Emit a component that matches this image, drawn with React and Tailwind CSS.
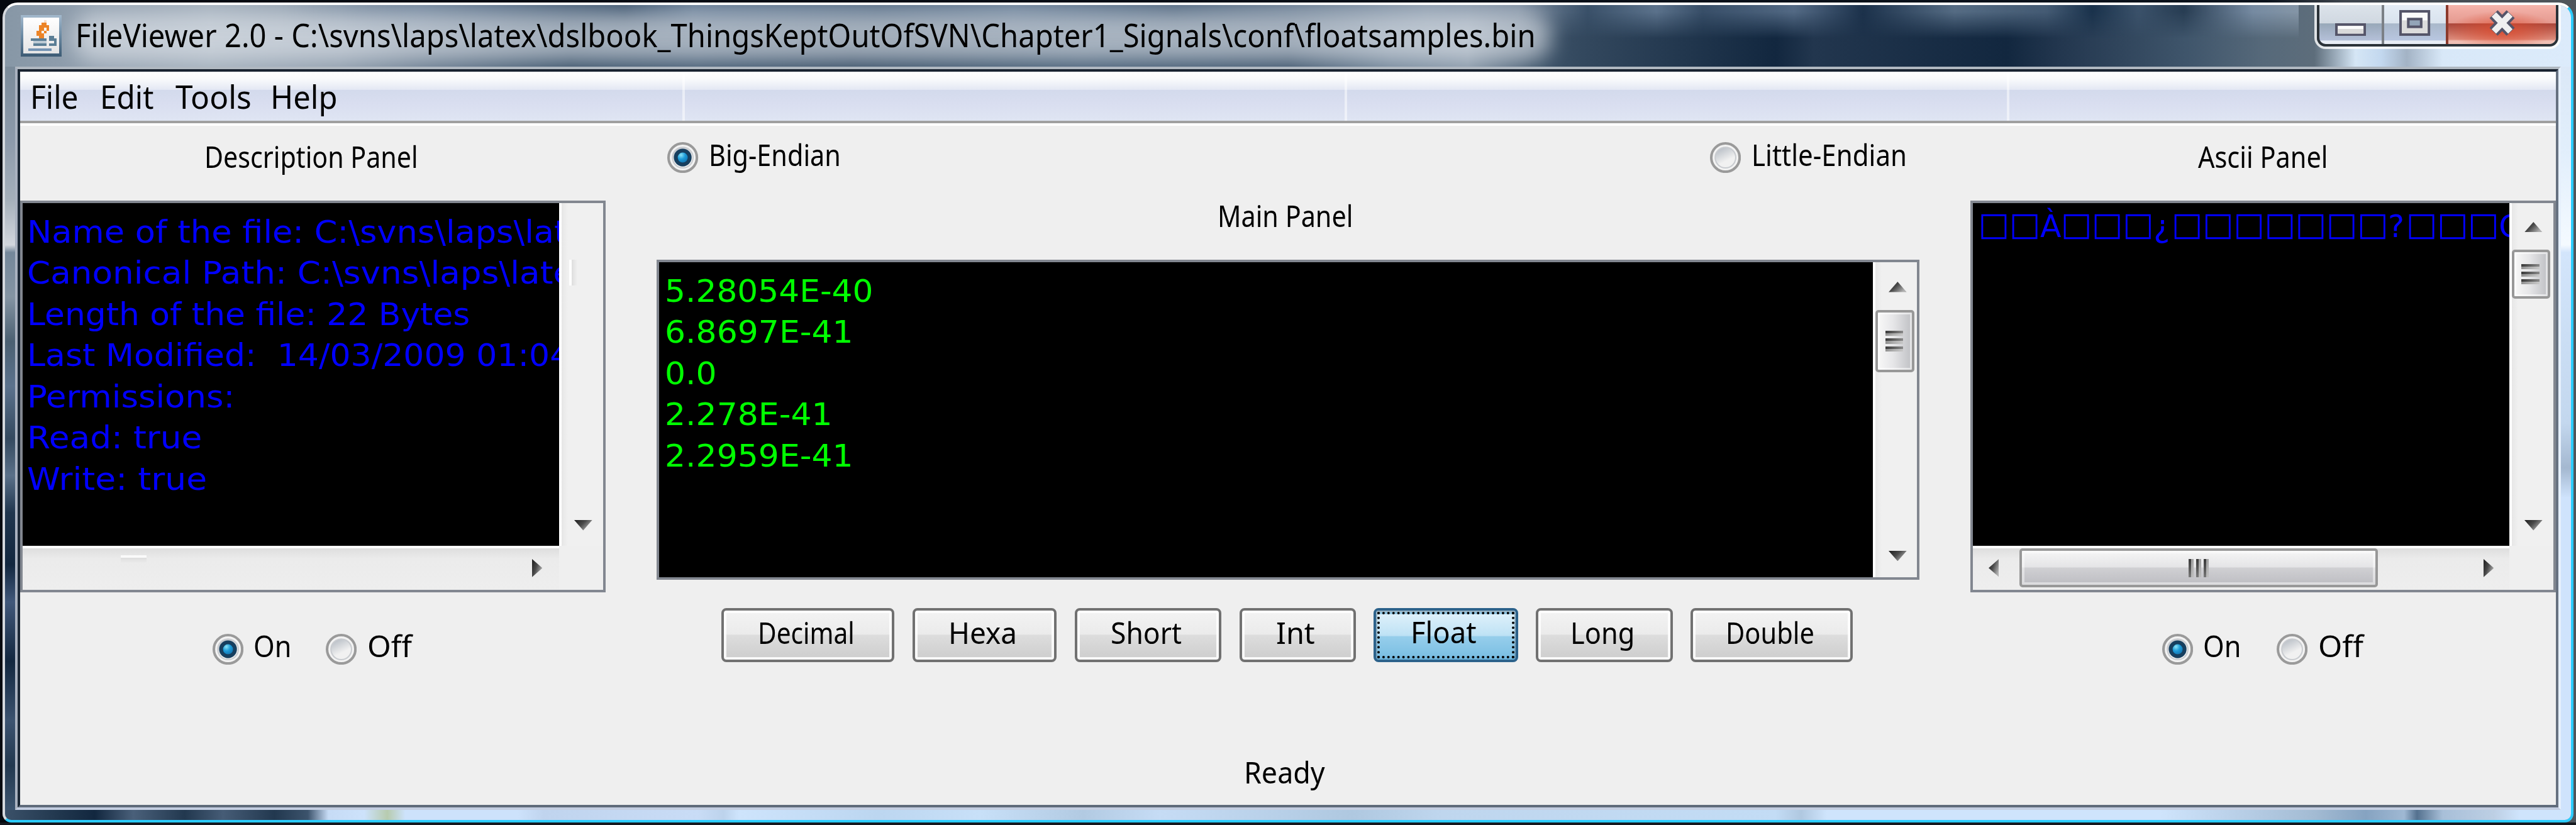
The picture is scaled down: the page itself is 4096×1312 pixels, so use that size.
import { useLayoutEffect, useRef, useState } from "react";

// One design pixel, equal to the --spacing value on the root element.
const UNIT = 4.098;

// Text condensed or widened so that it takes exactly `w` design pixels.
function Fit({ w, children, className = "" }) {
  const ref = useRef(null);
  const [scale, setScale] = useState(1);
  useLayoutEffect(() => {
    if (ref.current) setScale((w * UNIT) / ref.current.offsetWidth);
  }, [w]);
  return (
    <span className={"block shrink-0 " + className} style={{ width: w * UNIT }}>
      <span
        ref={ref}
        className="inline-block origin-left whitespace-pre"
        style={{ transform: `scaleX(${scale})` }}
      >
        {children}
      </span>
    </span>
  );
}

function Label({ w, children, className = "" }) {
  return (
    <Fit w={w} className={"text-[46.5px] leading-15 " + className}>
      {children}
    </Fit>
  );
}

function Radio({ on, label, w, className = "" }) {
  return (
    <div className={"flex items-start " + className}>
      <svg viewBox="0 0 24 24" className="size-12 shrink-0">
        <defs>
          <linearGradient id="radioOff" x1="0" y1="0" x2="0.5" y2="1">
            <stop offset="0" stopColor="#aeb5be" />
            <stop offset="0.75" stopColor="#f1f1f1" />
          </linearGradient>
          <radialGradient id="radioOn" cx="0.38" cy="0.32" r="0.75">
            <stop offset="0" stopColor="#8be4f6" />
            <stop offset="0.4" stopColor="#1c9ad8" />
            <stop offset="1" stopColor="#0d5f9a" />
          </radialGradient>
        </defs>
        <circle cx="12" cy="12" r="11" fill="#f3f3f3" stroke="#9a9a9a" strokeWidth="2" />
        <circle cx="12" cy="12" r="8" fill="url(#radioOff)" stroke="#c9ccd0" strokeWidth="1" />
        {on && <circle cx="12" cy="12" r="5.4" fill="url(#radioOn)" stroke="#173f5f" strokeWidth="3" />}
      </svg>
      <Label w={w} className="ml-4 -mt-2.5">
        {label}
      </Label>
    </div>
  );
}

const arrowShapes = {
  up: ["0 0 7 4", "M3.5 0 7 4H0z", "h-4 w-7"],
  down: ["0 0 7 4", "M0 0H7L3.5 4z", "h-4 w-7"],
  left: ["0 0 4 7", "M4 0V7L0 3.5z", "h-7 w-4"],
  right: ["0 0 4 7", "M0 0V7L4 3.5z", "h-7 w-4"],
};

function Arrow({ dir, className = "" }) {
  const [box, d, size] = arrowShapes[dir];
  return (
    <svg viewBox={box} className={"shrink-0 " + size + " " + className}>
      <defs>
        <linearGradient id="arrowFill" x1="0" y1="0" x2="1" y2="0.6">
          <stop offset="0" stopColor="#1c1c1c" />
          <stop offset="0.5" stopColor="#4a4a4a" />
          <stop offset="1" stopColor="#b0b0b0" />
        </linearGradient>
      </defs>
      <path d={d} fill="url(#arrowFill)" />
    </svg>
  );
}

function VThumb({ className }) {
  return (
    <div
      className={
        "flex w-15 shrink-0 flex-col items-center justify-center gap-1 rounded-[5px] border-4 border-[#989898] bg-linear-to-r from-[#f8f8f8] via-[#e6e6e8] via-45% to-[#bfc0c4] pr-0.5 shadow-[inset_0_0_0_3px_rgba(255,255,255,0.55)] " +
        className
      }
    >
      {[0, 1, 2].map((i) => (
        <div key={i} className="flex h-2 w-7 flex-col">
          <div className="h-1 bg-linear-to-r from-[#3a3a3a] via-[#606060] to-[#8a8a8a]" />
          <div className="h-1 bg-linear-to-r from-[#909090] via-[#b0b0b0] to-[#c8c8c8]" />
        </div>
      ))}
    </div>
  );
}

function VBar({ children, className = "" }) {
  return (
    <div
      className={
        "flex w-17 shrink-0 flex-col border-l-4 border-white bg-linear-to-r from-[#e6e6e6] via-[#f0f0f0] via-15% to-[#f0f0f0] " +
        className
      }
    >
      {children}
    </div>
  );
}

const infoLines = [
  ["Name of the file: C:\\svns\\laps\\lat", 209.5],
  ["Canonical Path: C:\\svns\\laps\\late", 212],
  ["Length of the file: 22 Bytes", 172],
  ["Last Modified:  14/03/2009 01:04", 211],
  ["Permissions:", 80.5],
  ["Read: true", 68],
  ["Write: true", 69.8],
];

const floatLines = [
  ["5.28054E-40", 81],
  ["6.8697E-41", 73],
  ["0.0", 20.2],
  ["2.278E-41", 65],
  ["2.2959E-41", 73],
];

const asciiCells = "□□À□□□¿□□□□□□□?□□□C".split("");

const buttons = [
  ["Decimal", "w-67", 37.5],
  ["Hexa", "w-56", 26.5],
  ["Short", "w-57", 27.5],
  ["Int", "w-45", 15],
  ["Float", "w-56", 25.5],
  ["Long", "w-53", 25],
  ["Double", "w-63", 34.5],
];

function PushButton({ label, size, w }) {
  const active = label === "Float";
  if (active) {
    return (
      <div
        className={
          "flex h-21 flex-col rounded-[8px] border-4 border-[#2c628b] bg-linear-to-b from-[#e3f2fb] via-[#c0e3f5] via-48% to-[#6cb4dc] p-0.5 shadow-[inset_0_3px_0_2px_rgba(110,140,160,0.6)] " +
          size
        }
      >
        <div className="flex flex-1 justify-center border-4 border-dotted border-black bg-linear-to-b from-transparent from-52% to-[#7fc3e6]/60 to-53%">
          <Label w={w} className="-mt-0.5 -ml-2">
            {label}
          </Label>
        </div>
      </div>
    );
  }
  return (
    <div
      className={
        "flex h-21 justify-center rounded-[8px] border-4 border-[#717171] bg-[linear-gradient(to_bottom,#f3f3f3_0,#ebebeb_48%,#dddddd_50%,#cdcdcd_100%)] shadow-[inset_0_0_0_4px_rgba(255,255,255,0.85)] " +
        size
      }
    >
      <Label w={w} className="mt-1.25 -ml-1.5">
        {label}
      </Label>
    </div>
  );
}

function JavaIcon() {
  return (
    <svg viewBox="0 0 16 16" shapeRendering="crispEdges" className="ml-6 mt-4 size-16 shrink-0">
      <defs>
        <linearGradient id="jFrame" x1="0" y1="0" x2="0" y2="1">
          <stop offset="0" stopColor="#a3b9cd" />
          <stop offset="0.5" stopColor="#6b8aa3" />
          <stop offset="1" stopColor="#3d5b74" />
        </linearGradient>
        <linearGradient id="jBody" x1="0" y1="0" x2="0" y2="1">
          <stop offset="0" stopColor="#ffffff" />
          <stop offset="1" stopColor="#e4e4e4" />
        </linearGradient>
      </defs>
      <rect width="16" height="16" fill="url(#jFrame)" />
      <rect x="1" y="1" width="14" height="14" fill="url(#jBody)" />
      <path d="M9 2h1v1h-1z" fill="#f6dcc6" />
      <path
        d="M8 3h2v1h1v1h-1v0h-1v1h-1v1h-1v1h-1v-2h1v-2h1zM10 5h1v1h-1v1h-1v1h-1v-1h1v-1h1zM7 7h1v1h1v1h-2z"
        fill="#ec8426"
      />
      <path d="M4 9h6v1h-6zM5 11h5v1h-5zM11 8h2v1h-2zM11 9h3v3h-1v-2h-2zM11 11h2v1h-2z" fill="#5b7e95" />
      <path d="M5 10h5v1h-5z" fill="#bccad4" />
      <path d="M3 13h9v1h-9z" fill="#7393b3" />
    </svg>
  );
}

function CaptionButtons() {
  return (
    <div className="absolute top-0 right-4 flex h-17 w-95.5 rounded-b-[18px] border-x-4 border-b-4 border-white/80">
      <div className="flex w-full overflow-hidden rounded-b-[14px] border-x-4 border-b-4 border-[#2b3238]">
        <div className="flex w-25 items-start justify-center border-r-4 border-[#7b8086] bg-[linear-gradient(to_bottom,#dce3ea_0,#d0d8e1_46%,#98a8b9_48%,#b4c0d8_90%,#e8edf5_92%)]">
          <svg viewBox="0 0 12 5" className="mt-7 h-5 w-12">
            <rect x="0.5" y="0.5" width="11" height="4" fill="#fbfbfb" stroke="#555569" />
            <rect x="1" y="2.2" width="10" height="1.8" fill="#dadada" />
          </svg>
        </div>
        <div className="flex w-25 items-start justify-center border-r-4 border-[#8c3a2c] bg-[linear-gradient(to_bottom,#e4ecf5_0,#d9e3ee_46%,#a9b8ca_48%,#b8c6e0_90%,#e8edf5_92%)]">
          <svg viewBox="0 0 12 10" className="mt-2 h-10 w-12">
            <rect x="0.5" y="0.5" width="11" height="9" fill="#fbfbfb" stroke="#555569" />
            <rect x="1" y="4" width="10" height="5" fill="#dcdcdc" />
            <rect x="3.5" y="3.5" width="5" height="3" fill="#93a5b8" stroke="#555569" />
          </svg>
        </div>
        <div className="flex flex-1 items-start justify-center bg-[radial-gradient(ellipse_50%_50%_at_50%_65%,rgba(222,74,44,0.8),transparent),linear-gradient(to_bottom,#f5b4ab_0,#e59a90_46%,#aa463a_48%,#dd8b7b_88%,#efbfb4_92%)]">
          <svg viewBox="0 0 11 10" className="mt-2 h-10 w-11">
            <path d="M2.2 1.6 8.8 8.4M8.8 1.6 2.2 8.4" stroke="#555569" strokeWidth="4.4" />
            <path d="M2.3 1.7 8.7 8.3M8.7 1.7 2.3 8.3" stroke="#f0f0f0" strokeWidth="2.4" />
          </svg>
        </div>
      </div>
    </div>
  );
}

function TitleBar() {
  return (
    <div className="relative flex h-24 shrink-0 items-start overflow-hidden bg-[linear-gradient(to_right,#8797a6_0,#93a1b0_4%,#a0adba_8%,#8b9aaa_13%,#5d7186_17%,#2f4861_22%,#3b536c_27%,#2e465f_33%,#3f5871_42%,#344c65_50%,#6f8397_54%,#8495a6_57%,#3f556b_59.5%,#33485e_61.5%,#12273f_69%,#22364e_70.5%,#12273f_78%,#22364e_80%,#3f556b_85%,#56697a_88%,#5d6d7b_90%,#d5e6f5_91.6%,#c3d8ef_92.6%,#a3b3c5_93.6%,#d8e8f8_95%,#dcebfb_100%)]">
      {/* soft reflections along the top edge of the glass */}
      <div className="absolute top-0 left-0 h-13 w-890 bg-[linear-gradient(to_right,transparent_0,transparent_12%,#6d829a_18%,#3a526c_27%,#667d97_30%,#5a718a_38%,#6b819a_44%,#506780_51%,#8b9bad_62%,#8292a5_66%,#3b526b_69%,#647b95_72%,#3c536d_74%,#5d748f_78%,#1b314b_81%,#60778f_85%,#4b627b_89%,#17304a_91%,#3c536c_93%,#24394f_95%,#7c91a9_98%,#8c9dae_100%)] [mask-image:linear-gradient(to_bottom,black_20%,transparent)] opacity-85" />
      <div className="absolute top-3 left-26 h-19 w-574 rounded-full bg-[#dfe4ea]/65 blur-[16px]" />
      <div className="relative flex items-start">
        <JavaIcon />
        <Fit w={566.5} className="ml-5.25 mt-1.75 text-[50.5px] leading-20">
          {"FileViewer 2.0 - C:\\svns\\laps\\latex\\dslbook_ThingsKeptOutOfSVN\\Chapter1_Signals\\conf\\floatsamples.bin"}
        </Fit>
      </div>
      <CaptionButtons />
    </div>
  );
}

function MenuBar() {
  return (
    <div className="relative flex h-19 shrink-0 bg-[linear-gradient(to_bottom,#ffffff_0,#fafbfc_14%,#e4e8f4_36.5%,#d3daec_37%,#d9def0_65%,#dfe5f3_100%)]">
      <div className="absolute inset-0 flex pl-0.75">
        {[0, 1, 2].map((i) => (
          <div key={i} className="w-257 border-r-4 border-white/50" />
        ))}
      </div>
      <div className="relative flex pl-3.75 text-[50.5px] leading-18 pt-0.75">
        <Fit w={18.75} className="mr-8.5">File</Fit>
        <Fit w={20.75} className="mr-8.5">Edit</Fit>
        <Fit w={29.5} className="mr-7.25">Tools</Fit>
        <Fit w={26}>Help</Fit>
      </div>
    </div>
  );
}

function DescriptionColumn() {
  return (
    <div className="flex w-227 flex-col">
      <div className="flex h-29 pt-4.5 pl-71.5">
        <Label w={83}>Description Panel</Label>
      </div>
      <div className="flex h-152 flex-col border-4 border-[#828790]">
        <div className="flex min-h-0 flex-1">
          <div className="flex-1 overflow-hidden bg-black pt-3.25 pl-1.5 font-['DejaVu_Sans',sans-serif] text-[49px] leading-16 text-[#0000ff]">
            {infoLines.map(([t, w]) => (
              <Fit key={t} w={w}>{t}</Fit>
            ))}
          </div>
          <VBar>
            <div className="mt-22 ml-3 h-10 w-3 border-l-4 border-white bg-linear-to-r from-[#dedede] to-[#f0f0f0]" />
            <Arrow dir="down" className="mt-auto mb-6 ml-5" />
          </VBar>
        </div>
        <div className="flex h-17 shrink-0">
          <div className="flex flex-1 border-t-4 border-white bg-linear-to-b from-[#dedede] via-[#ebebeb] via-25% to-[#eeeeee]">
            <div className="mt-2.5 ml-38 h-3 w-10 border-t-4 border-[#fafafa] bg-linear-to-b from-[#dddddd] to-[#ebebeb]" />
            <Arrow dir="right" className="mt-4 mr-6.5 ml-auto" />
          </div>
          <div className="w-17 bg-[#efefef]" />
        </div>
      </div>
      <div className="flex pt-16 pl-74.5">
        <Radio on label="On" w={14.75} className="w-44" />
        <Radio label="Off" w={17.25} />
      </div>
    </div>
  );
}

function MainColumn() {
  return (
    <div className="flex w-490 flex-col">
      <div className="flex h-25 pt-6.25 pl-4.25">
        <Radio on label="Big-Endian" w={51.25} className="w-404.5" />
        <Radio label="Little-Endian" w={60.25} />
      </div>
      <div className="flex h-27 pt-2.5 pl-217.75">
        <Label w={52.5}>Main Panel</Label>
      </div>
      <div className="flex h-124 border-4 border-[#828790]">
        <div className="flex-1 bg-black pt-3.25 pl-2.25 font-['DejaVu_Sans',sans-serif] text-[49px] leading-16 text-[#00ff00]">
          {floatLines.map(([t, w]) => (
            <Fit key={t} w={w}>{t}</Fit>
          ))}
        </div>
        <VBar>
          <Arrow dir="up" className="mt-7.5 ml-5" />
          <VThumb className="mt-7 h-24" />
          <Arrow dir="down" className="mt-auto mb-6.25 ml-5" />
        </VBar>
      </div>
      <div className="flex gap-7 pt-11 pl-25.25">
        {buttons.map(([label, size, w]) => (
          <PushButton key={label} label={label} size={size} w={w} />
        ))}
      </div>
      <div className="flex pt-35.5 pl-228">
        <Label w={31.5}>Ready</Label>
      </div>
    </div>
  );
}

function AsciiColumn() {
  return (
    <div className="flex w-227 flex-col">
      <div className="flex h-29 pt-4.5 pl-88.25">
        <Label w={50.5}>Ascii Panel</Label>
      </div>
      <div className="flex h-152 flex-col border-4 border-[#828790]">
        <div className="flex min-h-0 flex-1">
          <div className="flex min-w-0 flex-1 overflow-hidden bg-black pt-1.25 pl-2 font-['DejaVu_Sans',sans-serif] text-[49px] leading-16 text-[#0000ff]">
            {asciiCells.map((c, i) => (
              <span
                key={i}
                className={
                  "shrink-0 " +
                  (c === "□"
                    ? "w-12 -translate-y-1 text-[52px]"
                    : c === "À"
                      ? "w-8 text-center"
                      : "w-7")
                }
              >
                {c}
              </span>
            ))}
          </div>
          <VBar>
            <Arrow dir="up" className="mt-7.25 ml-5" />
            <VThumb className="mt-6.75 h-19" />
            <Arrow dir="down" className="mt-auto mb-6 ml-5" />
          </VBar>
        </div>
        <div className="flex h-17 shrink-0">
          <div className="flex flex-1 border-t-4 border-white bg-linear-to-b from-[#dedede] via-[#ebebeb] via-25% to-[#eeeeee]">
            <Arrow dir="left" className="mt-4 ml-6" />
            <div className="ml-8 flex h-15 w-139 items-center justify-center gap-1 rounded-[5px] border-4 border-[#989898] bg-[linear-gradient(to_bottom,#f6f6f6_0,#e4e4e6_48%,#d0d0d3_50%,#bdbdc2_100%)] shadow-[inset_0_0_0_4px_rgba(255,255,255,0.45)]">
              {[0, 1, 2].map((i) => (
                <div key={i} className="flex h-7 w-2">
                  <div className="w-1 bg-linear-to-b from-[#3a3a3a] via-[#555555] to-[#7a7a7a]" />
                  <div className="w-1 bg-linear-to-b from-[#a0a0a0] via-[#b0b0b0] to-[#bcbcbc]" />
                </div>
              ))}
            </div>
            <Arrow dir="right" className="mt-4 mr-6 ml-auto" />
          </div>
          <div className="w-17 bg-[#efefef]" />
        </div>
      </div>
      <div className="flex pt-16 pl-74.25">
        <Radio on label="On" w={14.75} className="w-44.5" />
        <Radio label="Off" w={17.5} />
      </div>
    </div>
  );
}

export default function App() {
  return (
    <div className="h-[1312px] w-[4096px] overflow-hidden bg-[linear-gradient(to_right,#05090f_0,#0b121b_88%,#3d444c_91%,#50565c_100%)] [--spacing:4.098px] font-['Noto_Sans','Open_Sans',sans-serif] text-black">
      <div className="flex h-full flex-col border-b-4 border-[#15191f]">
        <div className="mx-[4px] mt-[4px] flex min-h-0 flex-1 flex-col overflow-hidden rounded-t-[24px] rounded-b-[14px] border-4 border-t-white border-r-[#2bccff] border-b-[#2bccff] border-l-[#d5d9de] bg-[#8797a6]">
          <TitleBar />
          <div className="flex min-h-0 flex-1">
            <div className="w-4 shrink-0 bg-[linear-gradient(to_bottom,#7b8b9a_0,#8d9aab_10%,#a5b0bb_18%,#d2d6dd_24%,#74879a_25%,#8494a3_31%,#4b6072_37%,#5b728d_43%,#34495f_50%,#5a7089_55%,#20364e_60%,#12273f_67%,#41587a_72%,#12273f_80%,#3c5370_88%,#22384f_94%,#3d5570_100%)]" />
            <div className="flex min-w-0 flex-1 flex-col border-4 border-t-[#b0b8c1] border-b-[#c3cde0] border-l-[#a9b1bf] border-r-[#e6f0fc]">
              <div className="flex min-h-0 flex-1 flex-col border-4 border-t-[#1a2431] border-r-[#667180] border-b-[#5f6b7a] border-l-[#1b2735] bg-[#efefef]">
                <MenuBar />
                <div className="h-1 shrink-0 bg-[#a0a0a0]" />
                <div className="h-1 shrink-0 bg-white" />
                <div className="flex min-h-0 flex-1 justify-between">
                  <DescriptionColumn />
                  <MainColumn />
                  <AsciiColumn />
                </div>
              </div>
            </div>
            <div className="w-4 shrink-0 bg-[linear-gradient(to_bottom,#dbe8f7_0,#e2effc_12%,#f4faff_24%,#d3e5fb_25%,#c3d7ee_48%,#a4b8d0_54%,#cfe3fc_58%,#cfe3fc_100%)]" />
          </div>
          <div className="h-4 shrink-0 bg-[linear-gradient(to_right,#3b5169_0,#22384f_2%,#12273f_3.5%,#4a607a_5%,#22384f_7%,#465c76_8.5%,#22384f_10.5%,#3c536c_11.8%,#c6dbf5_12.6%,#cde2fb_14%,#b7cbaf_14.9%,#cde2fb_15.6%,#cde2fb_20%,#c0d4ee_21%,#c9dcf6_27%,#bdd3ec_28%,#cee4fc_28.6%,#bcd6f0_34%,#c8e0f8_38%,#b2cae2_42%,#c6dcf5_45%,#afc8e0_52.5%,#bfd6ee_56%,#c3dcf5_69%,#b0c8e0_70%,#cfe4fc_71%,#cfe4fc_84%,#a3bbd3_90%,#86a3c1_92%,#9fb8d3_93.5%,#54718f_94%,#a8bfd8_95%,#bdcfe4_97%,#cfe4fc_98%,#cfe4fc_100%)]" />
        </div>
      </div>
    </div>
  );
}
